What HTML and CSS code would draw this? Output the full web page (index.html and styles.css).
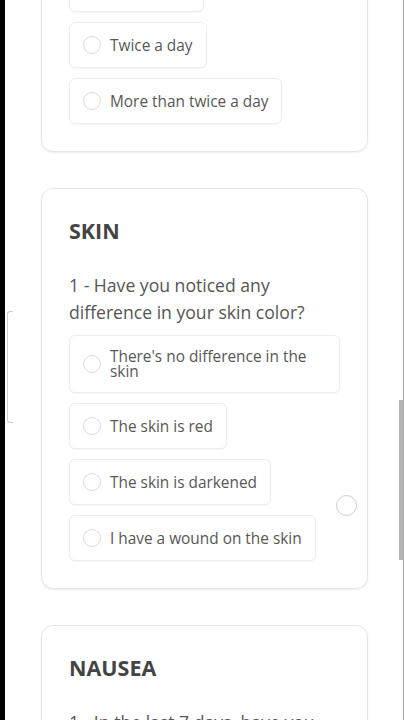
FILE: index.html
```html
<!DOCTYPE html>
<html lang="en">
<head>
<meta charset="utf-8">
<title>Questionnaire</title>
<link rel="stylesheet" href="styles.css">
</head>
<body>
<div class="frame">
  <div class="edge"></div>
  <main class="screen">
    <div class="scroller">
      <section class="card">
        <h2 class="card-title">VOMITING</h2>
        <p class="question">1 - How often do you vomit?</p>
        <div class="options">
          <label class="option"><span class="radio"></span><span class="option-text">Once a day</span></label>
          <label class="option"><span class="radio"></span><span class="option-text">Twice a day</span></label>
          <label class="option"><span class="radio"></span><span class="option-text">More than twice a day</span></label>
        </div>
      </section>

      <section class="card card-skin">
        <h2 class="card-title">SKIN</h2>
        <p class="question">1 - Have you noticed any difference in your skin color?</p>
        <div class="options">
          <label class="option"><span class="radio"></span><span class="option-text">There's no difference in the skin</span></label>
          <label class="option"><span class="radio"></span><span class="option-text">The skin is red</span></label>
          <label class="option"><span class="radio"></span><span class="option-text">The skin is darkened</span></label>
          <label class="option"><span class="radio"></span><span class="option-text">I have a wound on the skin</span></label>
        </div>
        <span class="float-radio"></span>
      </section>

      <section class="card">
        <h2 class="card-title">NAUSEA</h2>
        <p class="question">1 - In the last 7 days, have you often felt nauseous?</p>
      </section>
    </div>
  </main>
  <div class="side-bracket"></div>
  <div class="scroll-thumb"></div>
</div>
</body>
</html>
```

FILE: styles.css
```css
* {
  box-sizing: border-box;
}

html, body {
  margin: 0;
  padding: 0;
  height: 720px;
  overflow: hidden;
  background: #ffffff;
}

body {
  font-family: "Open Sans", "Noto Sans", sans-serif;
  color: #555555;
}

.frame {
  position: relative;
  display: flex;
  width: 404px;
  height: 720px;
}

.edge {
  width: 5px;
  flex: none;
  background: #000000;
}

.screen {
  width: 399px;
  flex: none;
  border-right: 1px solid #a8a8a8;
  overflow: hidden;
  background: #ffffff;
}

.scroller {
  margin-top: -154px;
}

.card {
  position: relative;
  width: 327px;
  margin: 0 0 36px 36px;
  padding: 27px 27px 27px;
  border: 1px solid #e6e6e6;
  border-radius: 12px;
  background: #ffffff;
  box-shadow: 0 1px 2px rgba(0, 0, 0, 0.07);
}

.card-title {
  margin: 0 0 26px;
  font-size: 21.5px;
  line-height: 30px;
  font-weight: 700;
  color: #444444;
}

.question {
  margin: 0 0 9px;
  font-size: 17.6px;
  line-height: 27px;
  color: #555555;
}

.options {
  display: flex;
  flex-direction: column;
  align-items: flex-start;
  gap: 10px;
}

.option {
  display: flex;
  align-items: center;
  gap: 9px;
  max-width: 100%;
  padding: 13px 13px 13px 13px;
  border: 1px solid #ececec;
  border-radius: 6px;
  background: #ffffff;
  box-shadow: 0 1px 1px rgba(0, 0, 0, 0.03);
}

.radio {
  flex: none;
  width: 18px;
  height: 18px;
  border: 1.5px solid #dadada;
  border-radius: 50%;
  background: #ffffff;
}

.option-text {
  font-size: 15.4px;
  line-height: 15px;
  color: #575757;
}

.float-radio {
  position: absolute;
  left: 294px;
  top: 306px;
  width: 21px;
  height: 21px;
  border: 1.5px solid #c6cde0;
  border-radius: 50%;
  background: #ffffff;
}

.side-bracket {
  position: absolute;
  left: 7px;
  top: 311px;
  width: 6px;
  height: 112px;
  border: 1px solid #cfcfcf;
  border-right: none;
  border-radius: 3px 0 0 3px;
}

.scroll-thumb {
  position: absolute;
  left: 399px;
  top: 400px;
  width: 4px;
  height: 160px;
  background: #b4b4b4;
}
```
